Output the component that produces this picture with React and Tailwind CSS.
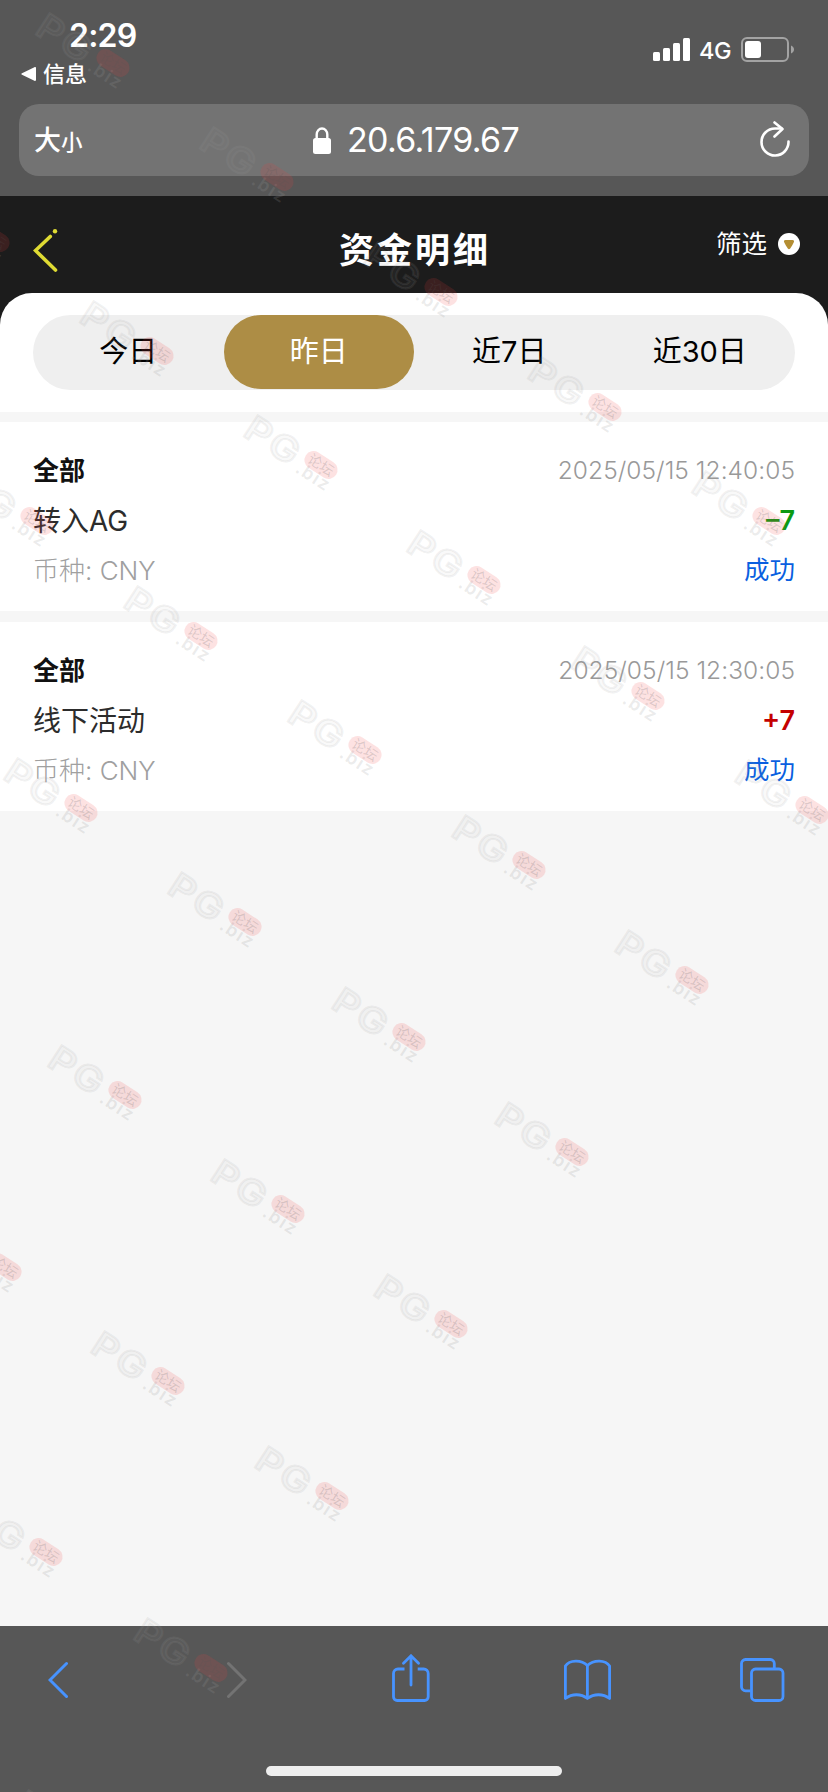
const tabs = ['今日', '昨日', '近7日', '近30日'];

const records = [
    { id: 1, type: '全部', name: '转入AG', currency: 'CNY', time: '2025/05/15 12:40:05', amount: '–7', income: false, status: '成功' },
    { id: 2, type: '全部', name: '线下活动', currency: 'CNY', time: '2025/05/15 12:30:05', amount: '+7', income: true, status: '成功' },
];

// centre of each stamp's red badge
const stamps = [
    [113, 63], [277, 177], [441, 292], [605, 407], [769, 521],
    [-7, 238], [157, 351], [321, 465], [484, 580], [648, 696], [812, 810],
    [37, 521], [201, 636], [365, 750], [529, 865], [692, 980],
    [81, 808], [245, 922], [409, 1037], [572, 1152],
    [125, 1095], [288, 1209], [451, 1324],
    [5, 1267], [168, 1381], [332, 1496],
    [46, 1552], [211, 1668], [92, 1840],
];

function Watermark() {
    return (
        <div className="absolute inset-0 overflow-hidden pointer-events-none select-none">
            {stamps.map(([x, y]) => (
                <div key={`${x}-${y}`} className="absolute w-0 h-0 rotate-[33deg]" style={{ left: x, top: y }}>
                    <span className="absolute left-[-83px] top-[-14px] origin-left scale-x-[1.14] text-[35px] leading-[38px] font-semibold tracking-[2px] text-[#a0a0a0]/6 [-webkit-text-stroke:2px_rgba(155,155,155,0.14)]">
                        PG
                    </span>
                    <span className="absolute left-[-19px] top-0 text-[18px] leading-[28px] font-semibold tracking-[1.5px] text-[#9a9a9a]/20">.biz</span>
                    <span className="absolute left-[-18px] top-[-9px] w-[36px] h-[18px] rounded-full bg-[#f03a3a]/15 text-center text-[14px] leading-[18px] text-[#555]/20 whitespace-nowrap">
                        论坛
                    </span>
                </div>
            ))}
        </div>
    );
}

function StatusBar() {
    return (
        <div className="h-[104px] flex justify-between pl-[21px] pr-[33px] text-white">
            <div className="pt-[16px]">
                <p className="pl-[48px] text-[32px] leading-[40px] font-semibold tracking-[-0.8px]">2:29</p>
                <p className="flex items-center text-[22px] leading-[36px] font-medium">
                    <svg className="w-[15px] h-[14px] mr-[7px]" viewBox="0 0 15 14" fill="currentColor">
                        <path d="M13.4.3C14.4-.2 15 .3 15 1.2v11.6c0 .9-.6 1.4-1.6.9L1 7.8C.2 7.4.2 6.6 1 6.2z" />
                    </svg>
                    信息
                </p>
            </div>
            <div className="flex items-start pt-[37px]">
                <svg className="w-[38px] h-[25px]" viewBox="0 0 38 25" fill="currentColor">
                    <rect x="0" y="15" width="7" height="9" rx="1.5" />
                    <rect x="10" y="11" width="7" height="13" rx="1.5" />
                    <rect x="20" y="6" width="7" height="18" rx="1.5" />
                    <rect x="30" y="1" width="7" height="23" rx="1.5" />
                </svg>
                <span className="w-[50px] pl-[8px] text-[23.5px] leading-[28px] font-medium tracking-[-0.5px]">4G</span>
                <svg className="w-[54px] h-[25px]" viewBox="0 0 54 25" fill="none">
                    <rect x="1" y="1" width="46" height="23" rx="5" stroke="#a3a3a3" strokeWidth="2" />
                    <rect x="4" y="4" width="16" height="17" rx="3" fill="white" />
                    <path d="M50 8.5c4 1.5 4 6.5 0 8z" fill="#a3a3a3" />
                </svg>
            </div>
        </div>
    );
}

function AddressBar() {
    return (
        <div className="mx-[19px] h-[72px] rounded-[20px] bg-[#737373] flex items-center text-white">
            <div className="w-[294px] pl-[15px] pt-[2px] flex items-baseline font-medium">
                <span className="text-[27px]">大</span>
                <span className="text-[21.5px]">小</span>
            </div>
            <svg className="w-[18px] h-[27px] mr-[16px]" viewBox="0 0 18 27">
                <path d="M3.7 12V7.5a5.3 6 0 0 1 10.6 0V12" fill="none" stroke="currentColor" strokeWidth="2.4" />
                <rect x="0" y="11" width="18" height="16" rx="2.5" fill="currentColor" />
            </svg>
            <span className="text-[34px] leading-[40px] tracking-[-0.65px]">20.6.179.67</span>
            <svg className="w-[32px] h-[38px] ml-auto mr-[18px]" viewBox="0 0 32 38" fill="none" stroke="currentColor" strokeWidth="2.6" strokeLinecap="round" strokeLinejoin="round">
                <path d="M29.5 20.5A13.5 13.5 0 1 1 16 7.5h6.5" />
                <path d="M15.5 1.5l8 6.5-8 7.5" />
            </svg>
        </div>
    );
}

function PageHeader() {
    return (
        <div className="h-[97px] pl-[33px] pr-[28px] flex text-white">
            <svg className="w-[25px] h-[43px] mt-[33px]" viewBox="0 0 25 43" fill="none" stroke="#dfdb33" strokeWidth="3.6" strokeLinecap="round" strokeLinejoin="miter">
                <path d="M17.3 7.5L2.5 21.5l20 19.5" />
                <circle cx="22" cy="2.3" r="2.2" fill="#dfdb33" stroke="none" />
            </svg>
            <h1 className="flex-1 pl-[56px] pt-[29px] text-center text-[35px] leading-[50px] font-bold tracking-[3px]">资金明细</h1>
            <div className="flex items-center h-[96px]">
                <span className="text-[25.5px] leading-[36px] mr-[11px]">筛选</span>
                <svg className="w-[22px] h-[22px]" viewBox="0 0 22 22">
                    <circle cx="11" cy="11" r="11" fill="white" />
                    <path d="M7.5 7h7c1.5 0 2 1 1.2 2.5-1 2-2 4-3.5 6-.8.9-1.6.9-2.4 0-1.500-2-2.500-4-3.500-6C5.500 8 6 7 7.500 7z" fill="#b48e33" />
                </svg>
            </div>
        </div>
    );
}

function RecordCard({ record }) {
    return (
        <div className="h-[189px] bg-white px-[33px] pt-[23px]">
            <div className="flex justify-between h-[50px] items-center">
                <span className="text-[26px] font-bold text-[#111]">{record.type}</span>
                <span className="text-[24.5px] tracking-[0.05px] font-light text-[#999]">{record.time}</span>
            </div>
            <div className="flex justify-between h-[51px] pt-px items-center">
                <span className="text-[28px] text-[#2c2c2c]">{record.name}</span>
                <span className={`text-[27px] font-semibold ${record.income ? 'text-[#c40000]' : 'text-[#0b9a12]'}`}>{record.amount}</span>
            </div>
            <div className="flex justify-between h-[48px] items-center">
                <span className="text-[26px] font-light text-[#a0a0a0]">币种: {record.currency}</span>
                <span className="text-[25.5px] text-[#0a5fe0]">{record.status}</span>
            </div>
        </div>
    );
}

function BottomBar() {
    return (
        <div className="h-[166px] bg-[#575757]">
            <div className="h-[140px] flex items-start pt-[28px] pl-[48px] text-[#4793ff]">
                <svg className="w-[20px] h-[48px]" viewBox="0 0 20 48" fill="none" stroke="currentColor" strokeWidth="3" strokeLinecap="round">
                    <path d="M18.5 9.5L2 26l16.5 16.5" />
                </svg>
                <svg className="w-[20px] h-[48px] ml-[159px] text-[#737373]" viewBox="0 0 20 48" fill="none" stroke="currentColor" strokeWidth="3" strokeLinecap="round">
                    <path d="M1.5 9.5L18 26 1.5 42.5" />
                </svg>
                <svg className="w-[40px] h-[50px] ml-[144px]" viewBox="0 0 40 50" fill="none" stroke="currentColor" strokeWidth="2.8">
                    <path d="M13.5 15H7a4.5 4.5 0 0 0-4.5 4.5v23.3A3.7 3.7 0 0 0 6.2 46.5h27.3a3.7 3.7 0 0 0 3.7-3.7V19.5a4.5 4.5 0 0 0-4.5-4.5h-6" />
                    <path d="M20 31V2.5M12.5 9.2L20 1.8l7.5 7.4" strokeLinecap="round" />
                </svg>
                <svg className="w-[50px] h-[48px] ml-[132px]" viewBox="0 0 50 48" fill="none" stroke="currentColor" strokeWidth="2.8" strokeLinejoin="round">
                    <path d="M2.4 12C6.5 5.5 18.5 5.5 24.4 11.5C30.5 5.5 42.5 5.5 46.6 12V44.5C40 39.5 31 39.5 24.4 44.5C18 39.5 9 39.5 2.4 44.5z" />
                    <path d="M24.4 11.5v33" />
                </svg>
                <svg className="w-[47px] h-[50px] ml-[126px]" viewBox="0 0 47 50" fill="none" stroke="currentColor" strokeWidth="2.8">
                    <path d="M11.5 36.8H6.5A4 4 0 0 1 2.5 32.8V9.5a4 4 0 0 1 4-4h24.8a4 4 0 0 1 4 4v5" />
                    <rect x="12.5" y="15" width="31.5" height="31.5" rx="4" />
                </svg>
            </div>
            <div className="mx-auto w-[296px] h-[10px] rounded-full bg-[#eeeeee]" />
        </div>
    );
}

export default function App() {
    return (
        <div className="relative w-[828px] h-[1792px] overflow-hidden flex flex-col bg-[#f6f6f6] font-[Inter,'Noto_Sans_CJK_SC',sans-serif]">
            <div className="h-[196px] bg-[#575757]">
                <StatusBar />
                <AddressBar />
            </div>
            <div className="bg-[#1c1c1c]">
                <PageHeader />
                <div className="h-[119px] pt-[22px] px-[33px] bg-white rounded-t-[32px]">
                    <div className="h-[75px] rounded-full bg-[#efefef] grid grid-cols-4">
                        {tabs.map((tab) => (
                            <button
                                key={tab}
                                className={`h-[74px] rounded-full text-[29px] leading-[74px] ${tab === '昨日' ? 'bg-[#ad8d45] text-white' : 'text-black'}`}
                            >
                                {tab}
                            </button>
                        ))}
                    </div>
                </div>
            </div>
            <div className="flex-1 flex flex-col gap-[11px] pt-[10px]">
                {records.map((record) => (
                    <RecordCard key={record.id} record={record} />
                ))}
            </div>
            <BottomBar />
            <Watermark />
        </div>
    );
}
